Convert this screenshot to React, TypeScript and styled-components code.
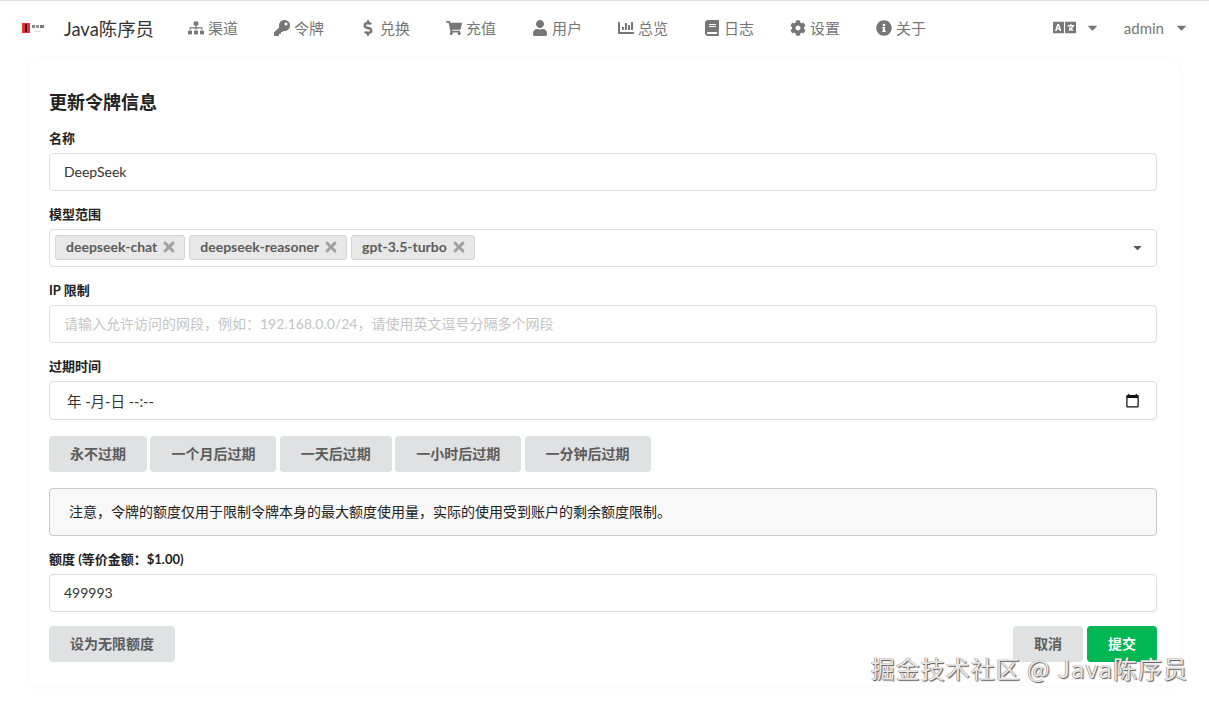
import React from 'react'
import styled, { createGlobalStyle } from 'styled-components'
import {
  FaSitemap, FaKey, FaDollarSign, FaShoppingCart, FaUser, FaChartBar,
  FaBook, FaCog, FaInfoCircle, FaLanguage, FaCaretDown, FaTimes,
} from 'react-icons/fa'

const FONT = `Lato, "Noto Sans CJK SC", "Liberation Sans", sans-serif`

const GlobalStyle = createGlobalStyle`
  html, body {
    margin: 0;
    height: 100%;
    overflow: hidden;
    background: #fff;
    font-family: ${FONT};
    color: #212121;
  }
  * { box-sizing: border-box; }
`

const Page = styled.div`
  position: relative;
  width: 1209px;
  height: 705px;
  overflow: hidden;
`

const Nav = styled.nav`
  display: flex;
  align-items: center;
  height: 54px;
  padding: 0 20px 0 21px;
  border-top: 1px solid #e2e2e2;
`

const Logo = styled.svg`
  width: 25px;
  height: 12px;
  margin-right: 18px;
  flex-shrink: 0;
`

const Brand = styled.div`
  width: 122px;
  font-size: 18.4px;
  color: #333;
  white-space: nowrap;
`

const NavItem = styled.div`
  display: flex;
  align-items: center;
  width: 86px;
  font-size: 15px;
  color: #767676;
  white-space: nowrap;
`

const IconSlot = styled.span`
  display: flex;
  align-items: center;
  justify-content: center;
  width: 20px;
  margin-right: 2px;
  font-size: 16px;
`

const NavRight = styled.div`
  display: flex;
  align-items: center;
  margin-left: auto;
  font-size: 15px;
  color: #767676;
`

const LangIcon = styled(FaLanguage)`
  font-size: 23px;
  margin-right: 9px;
`

const Caret = styled(FaCaretDown)<{ $gap?: number }>`
  font-size: 15px;
  margin-right: ${p => p.$gap ?? 0}px;
`

const AdminName = styled.span`
  margin-right: 10px;
`

const Main = styled.main`
  padding: 6px 29px 0;
`

const Card = styled.section`
  width: 1151px;
  height: 625px;
  padding: 32px 23px 23px 20px;
  border-radius: 4px;
  box-shadow: 0 0 10px rgba(0, 0, 0, 0.028);
`

const Title = styled.h3`
  margin: 0 0 19px;
  font-size: 18px;
  line-height: 20px;
  font-weight: 700;
  color: #212121;
`

const Form = styled.form`
  display: flex;
  flex-direction: column;
  gap: 16px;
`

const Field = styled.div`
  display: flex;
  flex-direction: column;
  gap: 6px;
`

const Label = styled.label`
  height: 16px;
  font-size: 13px;
  line-height: 14px;
  font-weight: 700;
  color: #212121;
`

const TextInput = styled.input`
  width: 100%;
  height: 38px;
  padding: 0 14px 2px;
  border: 1px solid #dedede;
  border-radius: 4px;
  outline: none;
  background: #fff;
  font-family: ${FONT};
  font-size: 14px;
  color: #333;

  &::placeholder {
    color: #c4c4c4;
    opacity: 1;
  }
`

const SelectBox = styled.div`
  display: flex;
  align-items: center;
  gap: 4px;
  height: 38px;
  padding: 0 12px 2px 5px;
  border: 1px solid #dedede;
  border-radius: 4px;
`

const Chip = styled.span`
  display: inline-flex;
  align-items: center;
  height: 25px;
  padding: 0 7px 1px 10px;
  border: 1px solid #d4d4d4;
  border-radius: 3px;
  background: #e8e8e8;
  font-size: 14px;
  font-weight: 700;
  color: #5c5c5c;
  white-space: nowrap;
`

const ChipClose = styled(FaTimes)`
  margin-left: 4px;
  font-size: 16px;
  color: #a0a0a0;
`

const SelectCaret = styled(FaCaretDown)`
  margin-left: auto;
  font-size: 13px;
  color: #555;
`

const DateBox = styled.div`
  display: flex;
  align-items: center;
  justify-content: space-between;
  height: 39px;
  padding: 0 16px 1px 17px;
  border: 1px solid #dedede;
  border-radius: 4px;
  font-size: 14.5px;
  color: #333;
`

const CalendarIcon = styled.svg`
  width: 15px;
  height: 15px;
  fill: #111;
`

const ButtonRow = styled.div`
  display: flex;
  gap: 3.4px;
`

const FooterActions = styled.div`
  display: flex;
  gap: 4px;
`

const Button = styled.button<{ $primary?: boolean }>`
  height: 36px;
  padding: 0 21px 2px;
  border: none;
  border-radius: 4px;
  background: ${p => (p.$primary ? '#00b853' : '#e0e1e2')};
  font-family: ${FONT};
  font-size: 14px;
  font-weight: 700;
  color: ${p => (p.$primary ? '#fff' : '#5c5c5c')};
  white-space: nowrap;
`

const Notice = styled.div`
  display: flex;
  align-items: center;
  height: 48px;
  padding: 0 19px 2px;
  border: 1px solid #c9c9c9;
  border-radius: 4px;
  background: #f8f8f9;
  font-size: 14px;
  color: #212121;
`

const Footer = styled.div`
  display: flex;
  justify-content: space-between;
  margin-top: -2px;
`

const Watermark = styled.div`
  position: absolute;
  right: 21px;
  bottom: 22px;
  font-family: "Noto Sans CJK SC", "Liberation Sans", sans-serif;
  font-size: 24px;
  line-height: 30px;
  letter-spacing: 1px;
  color: #e8e8e8;
  text-shadow: 1px 1px 1px #555, -0.5px -0.5px 0.5px #888;
  white-space: nowrap;
`

const navItems = [
  { icon: <FaSitemap />, label: '渠道' },
  { icon: <FaKey />, label: '令牌' },
  { icon: <FaDollarSign />, label: '兑换' },
  { icon: <FaShoppingCart />, label: '充值' },
  { icon: <FaUser />, label: '用户' },
  { icon: <FaChartBar />, label: '总览' },
  { icon: <FaBook />, label: '日志' },
  { icon: <FaCog />, label: '设置' },
  { icon: <FaInfoCircle />, label: '关于' },
]

const chips = ['deepseek-chat', 'deepseek-reasoner', 'gpt-3.5-turbo']
const expiryOptions = ['永不过期', '一个月后过期', '一天后过期', '一小时后过期', '一分钟后过期']

const App = () => {
  return (
    <Page>
      <GlobalStyle />
      <Nav>
        <Logo viewBox="0 0 25 12">
          <rect x="1" y="1" width="8" height="10" fill="#ee2b33" />
          <rect x="4" y="2" width="2" height="8" fill="#3a1010" />
          <rect x="11" y="3" width="3" height="3" fill="#888" />
          <rect x="15" y="3" width="3" height="3" fill="#999" />
          <rect x="19" y="3" width="4" height="3" fill="#777" />
          <rect x="13" y="9" width="7" height="1" fill="#ddd" />
        </Logo>
        <Brand>Java陈序员</Brand>
        {navItems.map(item => (
          <NavItem key={item.label}>
            <IconSlot>{item.icon}</IconSlot>
            {item.label}
          </NavItem>
        ))}
        <NavRight>
          <LangIcon />
          <Caret $gap={24} />
          <AdminName>admin</AdminName>
          <Caret />
        </NavRight>
      </Nav>

      <Main>
        <Card>
          <Title>更新令牌信息</Title>
          <Form>
            <Field>
              <Label>名称</Label>
              <TextInput defaultValue="DeepSeek" />
            </Field>
            <Field>
              <Label>模型范围</Label>
              <SelectBox>
                {chips.map(chip => (
                  <Chip key={chip}>
                    {chip}
                    <ChipClose />
                  </Chip>
                ))}
                <SelectCaret />
              </SelectBox>
            </Field>
            <Field>
              <Label>IP 限制</Label>
              <TextInput placeholder="请输入允许访问的网段，例如：192.168.0.0/24，请使用英文逗号分隔多个网段" />
            </Field>
            <Field>
              <Label>过期时间</Label>
              <DateBox>
                <span>年 -月-日 --:--</span>
                <CalendarIcon viewBox="0 0 24 24">
                  <path d="M20 3h-1V1h-2v2H7V1H5v2H4c-1.1 0-2 .9-2 2v16c0 1.1.9 2 2 2h16c1.1 0 2-.9 2-2V5c0-1.1-.9-2-2-2zm0 18H4V8h16v13z" />
                </CalendarIcon>
              </DateBox>
            </Field>
            <ButtonRow>
              {expiryOptions.map(option => (
                <Button type="button" key={option}>{option}</Button>
              ))}
            </ButtonRow>
            <Notice>注意，令牌的额度仅用于限制令牌本身的最大额度使用量，实际的使用受到账户的剩余额度限制。</Notice>
            <Field>
              <Label>额度 (等价金额：$1.00)</Label>
              <TextInput defaultValue="499993" />
            </Field>
            <Footer>
              <Button type="button">设为无限额度</Button>
              <FooterActions>
                <Button type="button">取消</Button>
                <Button type="button" $primary>提交</Button>
              </FooterActions>
            </Footer>
          </Form>
        </Card>
      </Main>

      <Watermark>掘金技术社区 @ Java陈序员</Watermark>
    </Page>
  )
}

export default App
